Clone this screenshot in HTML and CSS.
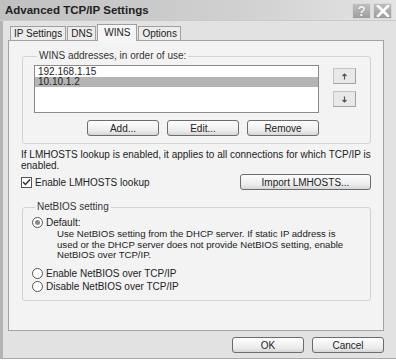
FILE: index.html
```html
<!DOCTYPE html>
<html lang="en">
<head>
    <meta charset="UTF-8">
    <title>Advanced TCP/IP Settings</title>
    <link rel="stylesheet" href="styles.css">
</head>
<body>
    <div class="window">
        <div class="titlebar">
            <span class="title">Advanced TCP/IP Settings</span>
            <div class="title-btns">
                <span class="tbtn help">?</span>
                <span class="tbtn close">
                    <svg width="14" height="12" viewBox="0 0 14 12"><path d="M2 1 L12 11 M12 1 L2 11" stroke="#fff" stroke-width="2.6" stroke-linecap="square"/></svg>
                </span>
            </div>
        </div>

        <div class="tabs">
            <span class="tab">IP Settings</span>
            <span class="tab">DNS</span>
            <span class="tab active">WINS</span>
            <span class="tab">Options</span>
        </div>

        <div class="panel">
            <fieldset class="group wins">
                <legend>WINS addresses, in order of use:</legend>
                <div class="wins-row">
                    <div class="wins-main">
                        <ul class="list">
                            <li>192.168.1.15</li>
                            <li class="sel">10.10.1.2</li>
                        </ul>
                        <div class="btn-row">
                            <button class="btn">Add...</button>
                            <button class="btn">Edit...</button>
                            <button class="btn">Remove</button>
                        </div>
                    </div>
                    <div class="arrows">
                        <button class="arrow">
                            <svg width="7" height="7" viewBox="0 0 7 7"><path d="M3.5 6.5 V1 M1.5 3 L3.5 1 L5.5 3" stroke="#555" stroke-width="1.2" fill="none"/></svg>
                        </button>
                        <button class="arrow">
                            <svg width="7" height="7" viewBox="0 0 7 7"><path d="M3.5 0.5 V6 M1.5 4 L3.5 6 L5.5 4" stroke="#555" stroke-width="1.2" fill="none"/></svg>
                        </button>
                    </div>
                </div>
            </fieldset>

            <p class="note">If LMHOSTS lookup is enabled, it applies to all connections for which TCP/IP is enabled.</p>

            <div class="lm-row">
                <label class="check">
                    <span class="box"><svg width="9" height="8" viewBox="0 0 9 8"><path d="M1 4 L3.5 6.5 L8 1.5" stroke="#333" stroke-width="1.5" fill="none"/></svg></span>
                    Enable LMHOSTS lookup
                </label>
                <button class="btn import">Import LMHOSTS...</button>
            </div>

            <fieldset class="group netbios">
                <legend>NetBIOS setting</legend>
                <label class="radio"><span class="dot on"></span>Default:</label>
                <div class="desc">
                    <span>Use NetBIOS setting from the DHCP server. If static IP address is</span>
                    <span>used or the DHCP server does not provide NetBIOS setting, enable</span>
                    <span>NetBIOS over TCP/IP.</span>
                </div>
                <label class="radio"><span class="dot"></span>Enable NetBIOS over TCP/IP</label>
                <label class="radio"><span class="dot"></span>Disable NetBIOS over TCP/IP</label>
            </fieldset>
        </div>

        <div class="footer">
            <button class="btn">OK</button>
            <button class="btn">Cancel</button>
        </div>
    </div>
</body>
</html>
```

FILE: styles.css
```css
body {
    margin: 0;
    font-family: "Liberation Sans", Arial, sans-serif;
    font-size: 10px;
    color: #222;
    background: #fff;
}
.window {
    width: 393px;
    height: 358px;
    border-left: 3px solid #b4b4b4;
    border-bottom: 1px solid #a8a8a8;
    background: #e2e2e2;
}
.titlebar {
    height: 20px;
    display: flex;
    align-items: center;
    justify-content: space-between;
    background: linear-gradient(to right, #c0c0c0, #d0d0d0 60%, #e4e4e4);
    border-bottom: 1px solid #c9c9c9;
    margin-left: -3px;
}
.title {
    font-weight: bold;
    font-size: 11.5px;
    margin-left: 5px;
    color: #1e1e1e;
}
.title-btns {
    display: flex;
    gap: 2px;
    margin-right: 4px;
    margin-top: 2px;
}
.tbtn {
    width: 19px;
    height: 16px;
    display: flex;
    align-items: center;
    justify-content: center;
    border: 1px solid #d8d8d8;
    box-sizing: border-box;
}
.help {
    font-weight: bold;
    font-size: 14px;
    color: #f2f2f2;
    background: linear-gradient(#c0c0c0, #9e9e9e);
    text-shadow: 0 0 1px #777;
}
.close {
    background: linear-gradient(#bdbdbd, #9c9c9c);
}
.tabs {
    display: flex;
    align-items: flex-end;
    height: 19px;
    margin-left: 7px;
}
.tab {
    height: 13px;
    line-height: 13px;
    padding: 0 3px;
    border: 1px solid #a0a0a0;
    border-bottom: none;
    background: #ececec;
    margin-right: 1px;
}
.tab.active {
    height: 16px;
    line-height: 15px;
    padding: 0 6px;
    background: #f6f6f6;
    position: relative;
    top: 1px;
    z-index: 1;
}
.panel {
    width: 374px;
    height: 280px;
    margin-left: 5px;
    border: 1px solid #a2a2a2;
    background: #f3f3f3;
    padding-top: 9px;
    box-sizing: content-box;
}
.group {
    margin: 0 12px 0 13px;
    border: 1px solid #d2d2d2;
    border-radius: 3px;
    min-width: 0;
}
.group legend {
    padding: 0 2px;
    margin-left: 3px;
    line-height: 12px;
    color: #333;
}
.wins {
    padding: 3px 0 7px 11px;
}
.wins-row {
    display: flex;
    gap: 14px;
}
.list {
    list-style: none;
    margin: 0;
    width: 283px;
    height: 45px;
    padding: 1px 0 0 0;
    border: 1px solid #8a8a8a;
    background: #fff;
}
.list li {
    height: 10px;
    line-height: 10px;
    padding-left: 3px;
}
.list li.sel {
    background: #b4b4b4;
}
.btn-row {
    display: flex;
    justify-content: flex-end;
    gap: 8px;
    margin-top: 7px;
}
.btn {
    width: 72px;
    height: 16px;
    padding: 0;
    font: inherit;
    color: #222;
    border: 1px solid #6c6c6c;
    border-radius: 3px;
    background: linear-gradient(#fdfdfd, #ececec 70%, #d6d6d6);
}
.arrows {
    display: flex;
    flex-direction: column;
    gap: 7px;
    padding-top: 3px;
}
.arrow {
    width: 23px;
    height: 16px;
    padding: 0;
    border: 1px solid #c4c4c4;
    border-right-color: #a2a2a2;
    border-bottom-color: #a2a2a2;
    background: #e8e8e8;
    display: flex;
    align-items: center;
    justify-content: center;
}
.note {
    margin: 6px 12px 0 12px;
    line-height: 10.5px;
}
.lm-row {
    display: flex;
    align-items: center;
    justify-content: space-between;
    margin: 3px 12px 0 12px;
}
.check {
    display: flex;
    align-items: center;
    gap: 3px;
}
.box {
    width: 9px;
    height: 9px;
    border: 1px solid #555;
    background: #fff;
    display: flex;
    align-items: center;
    justify-content: center;
}
.import {
    width: 131px;
}
.netbios {
    margin-top: 11px;
    padding: 3px 0 7px 9px;
}
.radio {
    display: flex;
    align-items: center;
    gap: 3px;
    height: 13px;
}
.dot {
    width: 9px;
    height: 9px;
    border: 1px solid #555;
    border-radius: 50%;
    background: #fff;
    display: flex;
    align-items: center;
    justify-content: center;
}
.dot.on::after {
    content: "";
    width: 5px;
    height: 5px;
    border-radius: 50%;
    background: #888;
}
.desc {
    display: flex;
    flex-direction: column;
    margin: 0 0 6px 25px;
    line-height: 10.5px;
    white-space: nowrap;
    font-size: 9.6px;
}
.footer {
    display: flex;
    justify-content: flex-end;
    gap: 8px;
    margin-top: 6px;
    width: 381px;
}
```
